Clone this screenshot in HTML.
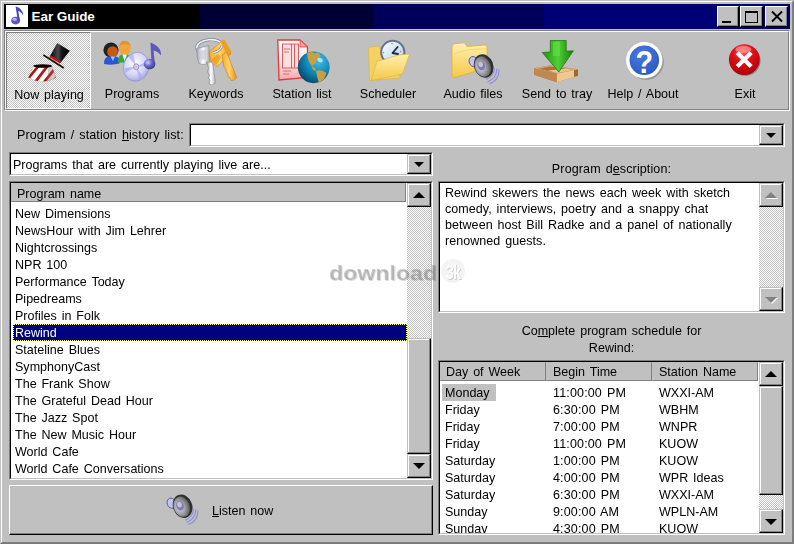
<!DOCTYPE html>
<html><head><meta charset="utf-8"><title>Ear Guide</title>
<style>
*{box-sizing:border-box;margin:0;padding:0}
html,body{width:794px;height:544px;overflow:hidden;background:#c0c0c0}
body{font-family:"Liberation Sans",sans-serif;font-size:13px;color:#000;position:relative}
div,svg,span{position:absolute}
.t{white-space:nowrap;line-height:16px;height:16px}
.t,.lbl,.hdr span,.desc{font-size:13.600px;word-spacing:1.500px;transform:scaleX(.922);transform-origin:0 0}
.c,.lbl{transform-origin:50% 0}
.raised{background:#c0c0c0;border:1px solid;border-color:#c0c0c0 #000 #000 #c0c0c0;box-shadow:inset -1px -1px 0 #808080,inset 1px 1px 0 #fff}
.btn{border-color:#fff #000 #000 #fff !important;box-shadow:inset -1px -1px 0 #808080,inset 1px 1px 0 #c0c0c0 !important}
.sunk{border:1px solid;border-color:#808080 #fff #fff #808080;background:#fff}
.sunk>.in{left:0;top:0;right:0;bottom:0;border:1px solid;border-color:#000 #c0c0c0 #c0c0c0 #000;overflow:hidden}
.chk{background-image:conic-gradient(#fff 25%,#c0c0c0 0 50%,#fff 0 75%,#c0c0c0 0);background-size:2px 2px}
.hdr{background:#c0c0c0;border:1px solid;border-color:#c0c0c0 #808080 #808080 #c0c0c0;white-space:nowrap;line-height:16px}
.up{width:0;height:0;border:6px solid transparent;border-top:0;border-bottom:6px solid #000}
.dn{width:0;height:0;border:6px solid transparent;border-bottom:0;border-top:6px solid #000}
.lbl{top:53px;left:-30px;right:-30px;text-align:center;white-space:nowrap;line-height:16px}
</style></head><body>
<div style="left:0;top:0;width:794px;height:544px;border:1px solid;border-color:#c0c0c0 #787878 #787878 #c0c0c0"></div>
<div style="left:1px;top:1px;width:792px;height:542px;border:1px solid;border-color:#fff #808080 #808080 #fff"></div>
<div id="title" style="left:4px;top:4px;width:786px;height:25px;background:linear-gradient(90deg,#000 0,#000 196px,#000033 196px,#000033 369px,#00005a 369px,#00005a 540px,#000076 540px,#000076 100%)">
<div style="left:2px;top:1px;width:22px;height:22px;background:#fff"><svg width="22" height="22" viewBox="0 0 22 22"><ellipse cx="9.6" cy="15.6" rx="4.4" ry="3.8" fill="#5a55c8"/><ellipse cx="8.6" cy="14.3" rx="2.2" ry="1.5" fill="#b4b1f2"/><path d="M11.8 15.6L9.6 1.6c2 .8 3.800 1 5.600 3.400 1.400 1.800 2.200 3.600 2 5.400-1.400-2.600-3-3.800-5-4.400L14 15.600z" fill="#4b46b8"/></svg></div>
<div style="white-space:nowrap;line-height:16px;left:27.500px;top:5px;color:#fff;font-weight:bold;font-size:13.500px;letter-spacing:-0.05px">Ear Guide</div>
<div class="raised btn" style="left:713px;top:2px;width:22px;height:21px"><div style="left:4px;top:14px;width:9px;height:2px;background:#000"></div></div>
<div class="raised btn" style="left:736px;top:2px;width:23px;height:21px"><div style="left:4px;top:4px;width:13px;height:12px;border:1px solid #000;border-top-width:2px"></div></div>
<div class="raised btn" style="left:761px;top:2px;width:23px;height:21px"><svg style="left:3.500px;top:3px" width="14" height="13" viewBox="0 0 14 13"><path d="M2 1.500L12 11.500M12 1.500L2 11.500" stroke="#000" stroke-width="1.900"/></svg></div>
</div>
<div style="left:4px;top:30px;width:786px;height:81px;border:1px solid;border-color:#808080 #fff #fff #808080"></div>
<div style="left:5px;top:31px;width:784px;height:79px;border:1px solid;border-color:#fff #808080 #808080 #fff"></div>
<div class="chk" style="left:6px;top:32px;width:85px;height:77px;border:1px solid;border-color:#808080 #fff #fff #808080"></div>
<div class="tbtn" id="b0" style="left:25px;top:33px;width:48px;height:75px"><div class="lbl" style="top:54px">Now playing</div></div>
<div class="tbtn" id="b1" style="left:108px;top:33px;width:48px;height:75px"><div class="lbl">Programs</div></div>
<div class="tbtn" id="b2" style="left:192px;top:33px;width:48px;height:75px"><div class="lbl">Keywords</div></div>
<div class="tbtn" id="b3" style="left:278px;top:33px;width:48px;height:75px"><div class="lbl">Station list</div></div>
<div class="tbtn" id="b4" style="left:364px;top:33px;width:48px;height:75px"><div class="lbl">Scheduler</div></div>
<div class="tbtn" id="b5" style="left:449px;top:33px;width:48px;height:75px"><div class="lbl">Audio files</div></div>
<div class="tbtn" id="b6" style="left:533px;top:33px;width:48px;height:75px"><div class="lbl">Send to tray</div></div>
<div class="tbtn" id="b7" style="left:619px;top:33px;width:48px;height:75px"><div class="lbl">Help / About</div></div>
<div class="tbtn" id="b8" style="left:721px;top:33px;width:48px;height:75px"><div class="lbl">Exit</div></div>
<svg style="left:0;top:30px" width="794" height="80" viewBox="0 30 794 80">
<defs>
<linearGradient id="gHat" x1="0" y1="0" x2="1" y2="0"><stop offset="0" stop-color="#000"/><stop offset=".42" stop-color="#4a4a4a"/><stop offset=".6" stop-color="#161616"/><stop offset="1" stop-color="#000"/></linearGradient>
<radialGradient id="gCd" cx=".4" cy=".4" r=".7"><stop offset="0" stop-color="#fff"/><stop offset=".6" stop-color="#d4d4fa"/><stop offset="1" stop-color="#9a9ae0"/></radialGradient>
<radialGradient id="gNote" cx=".35" cy=".35" r=".7"><stop offset="0" stop-color="#d0d0ff"/><stop offset=".5" stop-color="#6a66c8"/><stop offset="1" stop-color="#3a3890"/></radialGradient>
<radialGradient id="gGlobe" cx=".65" cy=".3" r=".8"><stop offset="0" stop-color="#40c0e8"/><stop offset=".5" stop-color="#1088b8"/><stop offset="1" stop-color="#04405c"/></radialGradient>
<linearGradient id="gFold" x1="0" y1="0" x2="0" y2="1"><stop offset="0" stop-color="#fff0b0"/><stop offset="1" stop-color="#f4c848"/></linearGradient>
<linearGradient id="gGreen" x1="0" y1="0" x2="1" y2="0"><stop offset="0" stop-color="#209010"/><stop offset=".5" stop-color="#50d038"/><stop offset="1" stop-color="#188008"/></linearGradient>
<radialGradient id="gRed" cx=".45" cy=".25" r=".8"><stop offset="0" stop-color="#f86060"/><stop offset=".4" stop-color="#e01018"/><stop offset="1" stop-color="#a80008"/></radialGradient>
<radialGradient id="gBlue" cx=".4" cy=".3" r=".8"><stop offset="0" stop-color="#4878e0"/><stop offset="1" stop-color="#2858c0"/></radialGradient>
<radialGradient id="gSpk" cx=".4" cy=".45" r=".6"><stop offset="0" stop-color="#e4e4ec"/><stop offset=".3" stop-color="#9c9cb0"/><stop offset=".62" stop-color="#c4c4c4"/><stop offset=".85" stop-color="#909090"/><stop offset="1" stop-color="#404040"/></radialGradient>
<radialGradient id="gSpk2" cx=".35" cy=".5" r=".65"><stop offset="0" stop-color="#d8d8e0"/><stop offset=".45" stop-color="#a8a8b0"/><stop offset=".8" stop-color="#787878"/><stop offset="1" stop-color="#585858"/></radialGradient>
<linearGradient id="gClock" x1="0" y1="0" x2="1" y2="1"><stop offset="0" stop-color="#fff"/><stop offset="1" stop-color="#a8d0f0"/></linearGradient>
<linearGradient id="gKeyS" x1="0" y1="0" x2="1" y2="0"><stop offset="0" stop-color="#a0a0a8"/><stop offset=".5" stop-color="#fff"/><stop offset="1" stop-color="#b0b0b8"/></linearGradient>
<linearGradient id="gKeyG" x1="0" y1="0" x2="1" y2="0"><stop offset="0" stop-color="#f4ac28"/><stop offset=".5" stop-color="#ffd468"/><stop offset="1" stop-color="#e89018"/></linearGradient>
<linearGradient id="gPage" x1="0" y1="0" x2="0" y2="1"><stop offset="0" stop-color="#fff"/><stop offset=".55" stop-color="#fde4e4"/><stop offset="1" stop-color="#f4a8a8"/></linearGradient>
<clipPath id="cGlobe"><circle cx="313.700" cy="67.300" r="15.900"/></clipPath>
<clipPath id="cBase"><path d="M33.500 66 L51.800 66 L55.800 77.500 Q42 85.500 28.400 77.500 Z"/></clipPath>
</defs>
<g>
<path d="M33.500 66 L51.800 66 L55.800 77.500 Q42 85.500 28.400 77.500 Z" fill="#fff" stroke="#c8b8a0" stroke-width=".6"/>
<g clip-path="url(#cBase)" stroke="#b41414" stroke-width="2.700"><path d="M27 80L40 64M33 85L49 64M41 86L57 66M50 86L60 73"/></g>
<path d="M51.800 66 L55.800 77.500 Q52 80.500 47 81.500 L48.500 66Z" fill="#806060" opacity=".35"/>
<ellipse cx="42.700" cy="66" rx="9.300" ry="1.700" fill="#000"/>
<path d="M57.200 43 L69.800 50.800 L60.400 63 L49.600 56.800 Z" fill="url(#gHat)"/>
<path d="M50.600 55.200 L61.200 61.600 L60 63.400 L49.300 57.200 Z" fill="#c01828"/>
<path d="M43.300 55 L63.800 68" stroke="#201000" stroke-width="1.800"/>
</g>
<g>
<circle cx="111" cy="50" r="7.600" fill="#222"/>
<ellipse cx="112.600" cy="51.800" rx="5.400" ry="5.600" fill="#c85a10"/>
<path d="M104 64 Q104 56.500 109 56.500 L116 56.500 Q120 57 119.600 63.500 Q112 65.500 104 64Z" fill="#2858d8"/>
<path d="M110.500 56.500 L113 61 L115 56.500Z" fill="#a0c8f0"/>
<ellipse cx="124.800" cy="48" rx="6" ry="7" fill="#f4a43c"/>
<path d="M119 46 Q120 40.500 125 40.800 Q130 41 130.700 46 Q125 42.500 119 46Z" fill="#d89838"/>
<path d="M118 62.500 Q118 55 122 54.600 L128 54.600 Q130.500 55.500 130 62.800Z" fill="#38a838"/>
<path d="M122.500 54.600 L124.500 61 L127 54.600Z" fill="#fff"/>
<ellipse cx="136.200" cy="66.800" rx="12.700" ry="14.600" transform="rotate(18 136.200 66.800)" fill="url(#gCd)" stroke="#8888d0" stroke-width=".6"/>
<path d="M136.200 66.800 L128 56 L133 53.500Z M136.200 66.800 L144 78.500 L139.500 80.500Z M136.200 66.800 L125 73 L124.500 68Z M136.200 66.800 L147.500 61 L148 66Z" fill="#a8a8ec" opacity=".7"/>
<ellipse cx="136.200" cy="66.800" rx="2.600" ry="3" fill="#e8d0e8" stroke="#8080c0" stroke-width=".8"/>
<ellipse cx="136.200" cy="66.800" rx="1.100" ry="1.300" fill="#c0c0c0"/>
<path d="M151.6 64 L150.4 42.400 Q153 43.200 156.800 46 Q161.800 50 160.800 55.600 Q158.400 51.400 153.600 50.400 L154.800 64Z" fill="#5c58bc"/>
<ellipse cx="149.600" cy="64" rx="5.800" ry="5.200" fill="url(#gNote)"/>
</g>
<g>
<ellipse cx="209.300" cy="46.300" rx="12.600" ry="6.600" transform="rotate(-6 209.300 46.300)" fill="none" stroke="#7c8498" stroke-width="3"/>
<ellipse cx="209.300" cy="46.300" rx="12.600" ry="6.600" transform="rotate(-6 209.300 46.300)" fill="none" stroke="#f0f0f8" stroke-width="1.600"/>
<path d="M196.600 48.500 L209 45.500 L209.500 62 Q205 66 199 63.500 Q196.200 56 196.600 48.500Z" fill="url(#gKeyS)" stroke="#8890a0" stroke-width=".7"/>
<path d="M199.500 51 L206 49.500 L206 59 L200 60Z" fill="#c8ccd8" opacity=".7"/>
<path d="M206.500 62 L212.500 62 L215.500 83 Q212 86.500 209 84 L210 80 L208 78 L209.500 75 L207.500 72 L208.500 68Z" fill="url(#gKeyS)" stroke="#8890a0" stroke-width=".7"/>
<path d="M209 52 L221 42 L228 48 L231 53.500 L217 66.500 L211 62Z" fill="url(#gKeyG)" stroke="#c88010" stroke-width=".6"/>
<path d="M220.500 41 L224.500 39.500 L231.500 52 L227 55Z" fill="#f0a020"/>
<path d="M222 55 L226.500 52 L236.500 77 Q235 81 231 80.500 L230 77.500 L228 76.500 L228 73.500 L226 72 L226 69 L224 67Z" fill="url(#gKeyG)" stroke="#c88010" stroke-width=".6"/>
<path d="M211 60 L218 54 L221 57 L216.500 65Z" fill="#e08818" opacity=".55"/>
<path d="M221.800 45.800 Q221 50.500 213.500 52.600" fill="none" stroke="#7c8498" stroke-width="2.600"/>
<path d="M221.800 45.800 Q221 50.500 213.500 52.600" fill="none" stroke="#f0f0f8" stroke-width="1.300"/>
</g>
<g>
<path d="M277.800 40 L300 40 L307.500 47 L307.500 77.500 L279 80 Z" fill="url(#gPage)" stroke="#dc3c3c" stroke-width="1.300"/>
<path d="M300 40 L300 47 L307.500 47Z" fill="#f8a0a0" stroke="#e04848" stroke-width=".8"/>
<rect x="282.500" y="44" width="16" height="24" fill="#fce0e0" stroke="#d05050" stroke-width=".9"/>
<path d="M291.500 44V68M294.500 44V68" stroke="#d05050" stroke-width=".9"/>
<path d="M284 49h6M284 52h5M283 71h8M283 74h6" stroke="#d86060" stroke-width=".9"/>
<circle cx="313.700" cy="67.300" r="15.900" fill="url(#gGlobe)"/>
<g clip-path="url(#cGlobe)" fill="#c8a040"><path d="M307 53 Q311 51 315 53.500 L318 52 L321 56 L317 58 L316 63 L312 66 L309 62 L307.500 57Z"/><path d="M316 71 Q321 69 326.500 73 L324 79 L319 83.500 L317.500 78Z"/><path d="M312 66 L316 69 L315 71 L312.500 69Z"/></g>
<ellipse cx="320" cy="60" rx="3" ry="2" fill="#fff" opacity=".6" transform="rotate(30 320 60)"/>
</g>
<g>
<path d="M368.500 49 Q368.500 47 371 46.800 L379 46.200 L380.500 49 L400 49 L400 78 L369.500 80.500Z" fill="#f6d060" stroke="#e0b030" stroke-width=".6"/>
<circle cx="392.8" cy="52.3" r="11.6" fill="url(#gClock)" stroke="#64748c" stroke-width="2"/>
<path d="M392.6 53 L397.6 47 M392.6 53 L398 54" stroke="#202830" stroke-width="1.800" stroke-linecap="round"/>
<circle cx="392" cy="43.500" r=".8" fill="#e08030"/><circle cx="383.500" cy="52.500" r=".8" fill="#e08030"/><circle cx="400.500" cy="51.500" r=".8" fill="#e08030"/>
<path d="M377 61 Q384 60 390 57.500 Q398 54.500 409.600 54 L402.500 74 L371 80.700Z" fill="url(#gFold)" stroke="#e0b030" stroke-width=".6"/>
</g>
<g>
<path d="M452 47 Q452 44 455 43.700 L464.500 42.800 L467 46.500 L485 45 Q487 45 487 47 L487 68 L454 77.800 L452 76Z" fill="url(#gFold)" stroke="#e0b030" stroke-width=".8"/>
<path d="M454 54 L467 50 L486 48.500" fill="none" stroke="#f8d868" stroke-width="1"/>
<ellipse cx="473.4" cy="61.6" rx="4.2" ry="5.2" transform="rotate(-20 473.4 61.6)" fill="#c4c4f0" stroke="#5858a8" stroke-width=".9"/><ellipse cx="483.7" cy="66" rx="9.6" ry="12" transform="rotate(-20 483.7 66)" fill="#303030"/><ellipse cx="482.8" cy="66.5" rx="7.9" ry="10.4" transform="rotate(-20 482.8 66.5)" fill="url(#gSpk2)"/><ellipse cx="481.09999999999997" cy="65.6" rx="3.7" ry="4.8" transform="rotate(-20 481.09999999999997 65.6)" fill="#7c7cb8"/><ellipse cx="480.59999999999997" cy="64.4" rx="2.3" ry="2.8" transform="rotate(-20 480.59999999999997 64.4)" fill="#c4c4d4"/><path d="M494.5 68 Q494 76 486 79.5 M497 68.5 Q496.5 78.5 487.5 82 M499.2 69.5 Q499 80.5 489.5 84" fill="none" stroke="#8c8ce0" stroke-width="1.1"/>
</g>
<g>
<path d="M534 68.300 L549.800 65.300 L578 69.300 L578 75.700 L556.800 82.200 L534 74.700Z" fill="#b88048"/>
<path d="M534 68.300 L549.800 65.300 L578 69.300 L556.800 73.700Z" fill="#d8a878"/>
<path d="M538.500 68.700 L550 66.600 L574 69.900 L557 73Z" fill="#a87444"/>
<path d="M548 70.500 L566 68.800 L574 69.900 L557 73Z" fill="#e8c494"/>
<path d="M556.800 73.700 L578 69.300 L578 75.700 L556.800 82.200Z" fill="#f0c890"/>
<path d="M574 70.200 L578 69.300 L578 75.700 L574 77Z" fill="#a06830"/>
<path d="M534 68.300 L556.800 73.700 L556.800 82.200 L534 74.700Z" fill="#c08850"/>
<path d="M550.300 40.500 L566.200 40.500 L566.200 51.200 L573.400 50.800 L558.800 72 L542.300 52.500 L550.300 52Z" fill="url(#gGreen)" stroke="#187008" stroke-width=".7"/>
<path d="M553 42 L560 42 L560 56 L553 56Z" fill="#68e048" opacity=".55"/>
</g>
<g>
<circle cx="646" cy="62" r="17.800" fill="#606060" opacity=".45"/>
<circle cx="644.300" cy="60.300" r="18.200" fill="#fff"/>
<circle cx="644.300" cy="60.300" r="14.800" fill="url(#gBlue)"/>
<text x="0" y="0" transform="translate(644.3 72.6) scale(.9 1)" text-anchor="middle" font-family="Liberation Sans, sans-serif" font-weight="bold" font-size="32" fill="#fff">?</text>
</g>
<g>
<circle cx="745.300" cy="60.600" r="15.300" fill="#505050" opacity=".5"/>
<circle cx="744.300" cy="59.600" r="15.400" fill="url(#gRed)"/>
<ellipse cx="743.500" cy="49.500" rx="8" ry="3.500" fill="#ffb0b0" opacity=".55"/>
<path d="M737.200 52.800 L751.200 66.600 M751.200 52.800 L737.200 66.600" stroke="#fff" stroke-width="4.200"/>
</g>
</svg>
<div class="t" style="left:17px;top:127px;letter-spacing:0.11px">Program / station <u>h</u>istory list:</div>
<div class="sunk" style="left:189px;top:123px;width:596px;height:24px"><div class="in"><div class="raised" style="right:0;top:0;width:24px;height:20px"><div class="dn" style="left:6px;top:7px;border-width:5px 5px 0 5px"></div></div></div></div>
<div class="sunk" style="left:9px;top:152px;width:424px;height:24px"><div class="in"><div class="t" style="left:2px;top:3px">Programs that are currently playing live are...</div><div class="raised" style="right:0;top:0;width:24px;height:20px"><div class="dn" style="left:6px;top:7px;border-width:5px 5px 0 5px"></div></div></div></div>
<div class="sunk" style="left:9px;top:181px;width:424px;height:299px"><div class="in">
<div class="hdr" style="left:0;top:0;width:395px;height:19px"><span style="left:5px;top:2px">Program name</span></div>
<div class="t" style="left:4px;top:23px">New Dimensions</div>
<div class="t" style="left:4px;top:40px">NewsHour with Jim Lehrer</div>
<div class="t" style="left:4px;top:57px">Nightcrossings</div>
<div class="t" style="left:4px;top:74px">NPR 100</div>
<div class="t" style="left:4px;top:91px">Performance Today</div>
<div class="t" style="left:4px;top:108px">Pipedreams</div>
<div class="t" style="left:4px;top:125px">Profiles in Folk</div>
<div style="left:2px;top:141px;width:394px;height:17px;background:#000080;outline:1px dotted #ff8;outline-offset:-1px"></div><div class="t" style="left:4px;top:142px;color:#fff">Rewind</div>
<div class="t" style="left:4px;top:159px">Stateline Blues</div>
<div class="t" style="left:4px;top:176px">SymphonyCast</div>
<div class="t" style="left:4px;top:193px">The Frank Show</div>
<div class="t" style="left:4px;top:210px">The Grateful Dead Hour</div>
<div class="t" style="left:4px;top:227px">The Jazz Spot</div>
<div class="t" style="left:4px;top:244px">The New Music Hour</div>
<div class="t" style="left:4px;top:261px">World Cafe</div>
<div class="t" style="left:4px;top:278px">World Cafe Conversations</div>
<div class="chk" style="left:396px;top:0px;width:24px;height:295px"></div>
<div class="raised" style="left:396px;top:0px;width:24px;height:24px"><div class="up" style="left:5px;top:8px"></div></div>
<div class="raised" style="left:396px;top:271px;width:24px;height:24px"><div class="dn" style="left:5px;top:8px"></div></div>
<div class="raised" style="left:396px;top:155px;width:24px;height:116px"></div>
</div></div>
<div class="raised btn" style="left:9px;top:485px;width:424px;height:50px"><div class="t" style="left:202px;top:17px"><u>L</u>isten now</div></div>
<svg style="left:160px;top:490px" width="50" height="40" viewBox="160 490 50 40"><ellipse cx="171.4" cy="503.2" rx="4.2" ry="5.2" transform="rotate(-20 171.4 503.2)" fill="#c4c4f0" stroke="#5858a8" stroke-width=".9"/><ellipse cx="182.6" cy="506.2" rx="9.6" ry="12" transform="rotate(-20 182.6 506.2)" fill="#303030"/><ellipse cx="181.7" cy="506.7" rx="7.9" ry="10.4" transform="rotate(-20 181.7 506.7)" fill="url(#gSpk2)"/><ellipse cx="180.0" cy="505.8" rx="3.7" ry="4.8" transform="rotate(-20 180.0 505.8)" fill="#7c7cb8"/><ellipse cx="179.5" cy="504.59999999999997" rx="2.3" ry="2.8" transform="rotate(-20 179.5 504.59999999999997)" fill="#c4c4d4"/><path d="M193.4 509 Q193 517 185 520.2 M195.8 509.5 Q195.4 519.4 186.4 522.6 M198 510.4 Q197.8 521.4 188.2 524.6" fill="none" stroke="#8c8ce0" stroke-width="1.1"/></svg>
<div class="t c" style="left:439px;width:345px;text-align:center;top:161px;letter-spacing:0.12px">Program d<u>e</u>scription:</div>
<div class="sunk" style="left:438px;top:181px;width:347px;height:132px"><div class="in">
<div class="desc" style="left:4.500px;top:2px;letter-spacing:0.04px;line-height:16px;white-space:nowrap">Rewind skewers the news each week with sketch<br>comedy, interviews, poetry and a snappy chat<br>between host Bill Radke and a panel of nationally<br>renowned guests.</div>
<div class="chk" style="right:0;top:0;width:24px;height:128px"></div>
<div class="raised" style="right:0;top:0;width:24px;height:24px"><div class="up" style="left:5px;top:8px;border-bottom-color:#808080;filter:drop-shadow(1px 1px 0 #fff)"></div></div>
<div class="raised" style="right:0;top:104px;width:24px;height:24px"><div class="dn" style="left:5px;top:9px;border-top-color:#808080;filter:drop-shadow(1px 1px 0 #fff)"></div></div>
</div></div>
<div class="t c" style="left:439px;width:345px;text-align:center;top:323px">Co<u>m</u>plete program schedule for</div>
<div class="t c" style="left:439px;width:345px;text-align:center;top:340px">Rewind:</div>
<div class="sunk" style="left:438px;top:360px;width:347px;height:175px"><div class="in">
<div class="hdr" style="left:0;top:0;width:106px;height:19px"><span style="left:5px;top:1px">Day of Week</span></div>
<div class="hdr" style="left:106px;top:0;width:106px;height:19px"><span style="left:6px;top:1px">Begin Time</span></div>
<div class="hdr" style="left:212px;top:0;width:106px;height:19px"><span style="left:6px;top:1px">Station Name</span></div>
<div style="left:2px;top:22px;width:54px;height:17px;background:#c0c0c0"></div>
<div class="t" style="left:4.500px;top:23px">Monday</div><div class="t" style="left:113px;top:23px;letter-spacing:0.15px">11:00:00 PM</div><div class="t" style="left:219px;top:23px">WXXI-AM</div>
<div class="t" style="left:4.500px;top:40px">Friday</div><div class="t" style="left:113px;top:40px;letter-spacing:0.15px">6:30:00 PM</div><div class="t" style="left:219px;top:40px">WBHM</div>
<div class="t" style="left:4.500px;top:57px">Friday</div><div class="t" style="left:113px;top:57px;letter-spacing:0.15px">7:00:00 PM</div><div class="t" style="left:219px;top:57px">WNPR</div>
<div class="t" style="left:4.500px;top:74px">Friday</div><div class="t" style="left:113px;top:74px;letter-spacing:0.15px">11:00:00 PM</div><div class="t" style="left:219px;top:74px">KUOW</div>
<div class="t" style="left:4.500px;top:91px">Saturday</div><div class="t" style="left:113px;top:91px;letter-spacing:0.15px">1:00:00 PM</div><div class="t" style="left:219px;top:91px">KUOW</div>
<div class="t" style="left:4.500px;top:108px">Saturday</div><div class="t" style="left:113px;top:108px;letter-spacing:0.15px">4:00:00 PM</div><div class="t" style="left:219px;top:108px">WPR Ideas</div>
<div class="t" style="left:4.500px;top:125px">Saturday</div><div class="t" style="left:113px;top:125px;letter-spacing:0.15px">6:30:00 PM</div><div class="t" style="left:219px;top:125px">WXXI-AM</div>
<div class="t" style="left:4.500px;top:142px">Sunday</div><div class="t" style="left:113px;top:142px;letter-spacing:0.15px">9:00:00 AM</div><div class="t" style="left:219px;top:142px">WPLN-AM</div>
<div class="t" style="left:4.500px;top:159px">Sunday</div><div class="t" style="left:113px;top:159px;letter-spacing:0.15px">4:30:00 PM</div><div class="t" style="left:219px;top:159px">KUOW</div>
<div class="chk" style="right:0;top:0;width:24px;height:171px"></div>
<div class="raised" style="right:0;top:0;width:24px;height:24px"><div class="up" style="left:5px;top:8px"></div></div>
<div class="raised" style="right:0;top:147px;width:24px;height:24px"><div class="dn" style="left:5px;top:9px"></div></div>
<div class="raised" style="right:0;top:24px;width:24px;height:109px"></div>
</div></div>
<div style="left:329px;top:261px;font-weight:bold;font-size:21px;line-height:24px;transform:scaleX(1.1);transform-origin:0 0;color:rgba(110,110,110,.36);text-shadow:1px 1px 0 rgba(90,90,90,.22);white-space:nowrap">download</div>
<div style="left:441px;top:259px;width:24px;height:24px;border-radius:12px;background:rgba(240,240,240,.75)"></div>
<div style="left:441px;top:260px;width:24px;height:24px;line-height:24px;text-align:center;font-weight:bold;font-size:20px;letter-spacing:-1px;transform:scaleX(.72);color:rgba(255,255,255,.95);text-shadow:1px 1px 0 rgba(120,120,120,.35)">3k</div>
</body></html>
